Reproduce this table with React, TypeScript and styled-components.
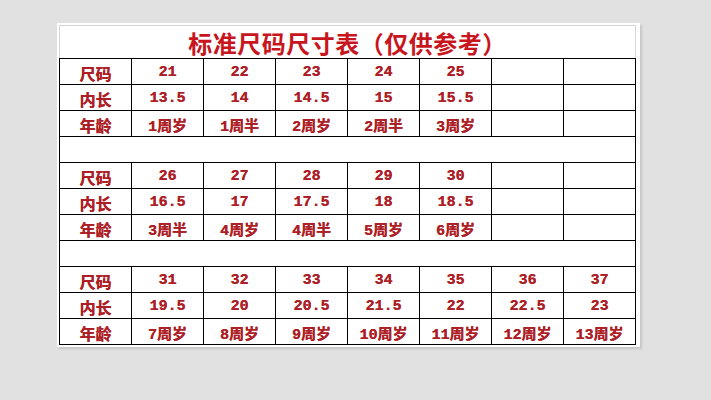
import React from "react";
import styled, { createGlobalStyle } from "styled-components";

const Global = createGlobalStyle`
  html, body { margin: 0; padding: 0; background: #e1e1e1; }
  body { width: 711px; height: 400px; overflow: hidden; }
`;

const Page = styled.div`
  display: flex;
  align-items: flex-start;
  padding: 23px 0 0 57px;
  height: 400px;
  box-sizing: border-box;
`;

const Sheet = styled.div`
  background: #ffffff;
  padding: 2px 4px 2px 2px;
  box-shadow: 2px 2px 2px rgba(0, 0, 0, 0.12);
  display: flex;
  flex-direction: column;
`;

const TitleRow = styled.div`
  height: 33px;
  box-sizing: border-box;
  border-top: 1px solid #d6d6d6;
  border-left: 1px solid #d6d6d6;
  border-right: 1px solid #d6d6d6;
  display: flex;
  align-items: center;
  justify-content: center;
  font-family: "Noto Sans CJK SC", sans-serif;
  font-weight: 700;
  font-size: 24px;
  letter-spacing: 0.5px;
  color: #c8161e;
`;

const Grid = styled.div`
  display: grid;
  grid-template-columns: repeat(8, 71px);
  grid-auto-rows: 25px;
  gap: 1px;
  padding: 1px;
  background: #000000;
`;

const Cell = styled.div<{ $cjk?: boolean }>`
  background: #ffffff;
  display: flex;
  align-items: center;
  justify-content: center;
  padding-top: 2px;
  box-sizing: border-box;
  font-family: "Liberation Mono", "Noto Sans CJK SC", monospace;
  font-weight: 700;
  font-size: ${(p) => (p.$cjk ? "16px" : "15px")};
  color: #ad1f27;
  text-shadow: 0.3px 0 0 #ad1f27;
  white-space: nowrap;
`;

const Spacer = styled.div`
  background: #ffffff;
  grid-column: 1 / -1;
`;

type Block = { sizes: string[]; lens: string[]; ages: string[] };

const blocks: Block[] = [
  {
    sizes: ["21", "22", "23", "24", "25"],
    lens: ["13.5", "14", "14.5", "15", "15.5"],
    ages: ["1周岁", "1周半", "2周岁", "2周半", "3周岁"],
  },
  {
    sizes: ["26", "27", "28", "29", "30"],
    lens: ["16.5", "17", "17.5", "18", "18.5"],
    ages: ["3周半", "4周岁", "4周半", "5周岁", "6周岁"],
  },
  {
    sizes: ["31", "32", "33", "34", "35", "36", "37"],
    lens: ["19.5", "20", "20.5", "21.5", "22", "22.5", "23"],
    ages: ["7周岁", "8周岁", "9周岁", "10周岁", "11周岁", "12周岁", "13周岁"],
  },
];

const Row: React.FC<{ label: string; values: string[] }> = ({ label, values }) => {
  const cells = Array.from({ length: 7 }, (_, i) => values[i] ?? "");
  return (
    <>
      <Cell $cjk>{label}</Cell>
      {cells.map((v, i) => (
        <Cell key={i}>{v}</Cell>
      ))}
    </>
  );
};

export default function App() {
  return (
    <>
      <Global />
      <Page>
        <Sheet>
          <TitleRow>标准尺码尺寸表（仅供参考）</TitleRow>
          <Grid>
            {blocks.map((b, i) => (
              <React.Fragment key={i}>
                {i > 0 && <Spacer />}
                <Row label="尺码" values={b.sizes} />
                <Row label="内长" values={b.lens} />
                <Row label="年龄" values={b.ages} />
              </React.Fragment>
            ))}
          </Grid>
        </Sheet>
      </Page>
    </>
  );
}
